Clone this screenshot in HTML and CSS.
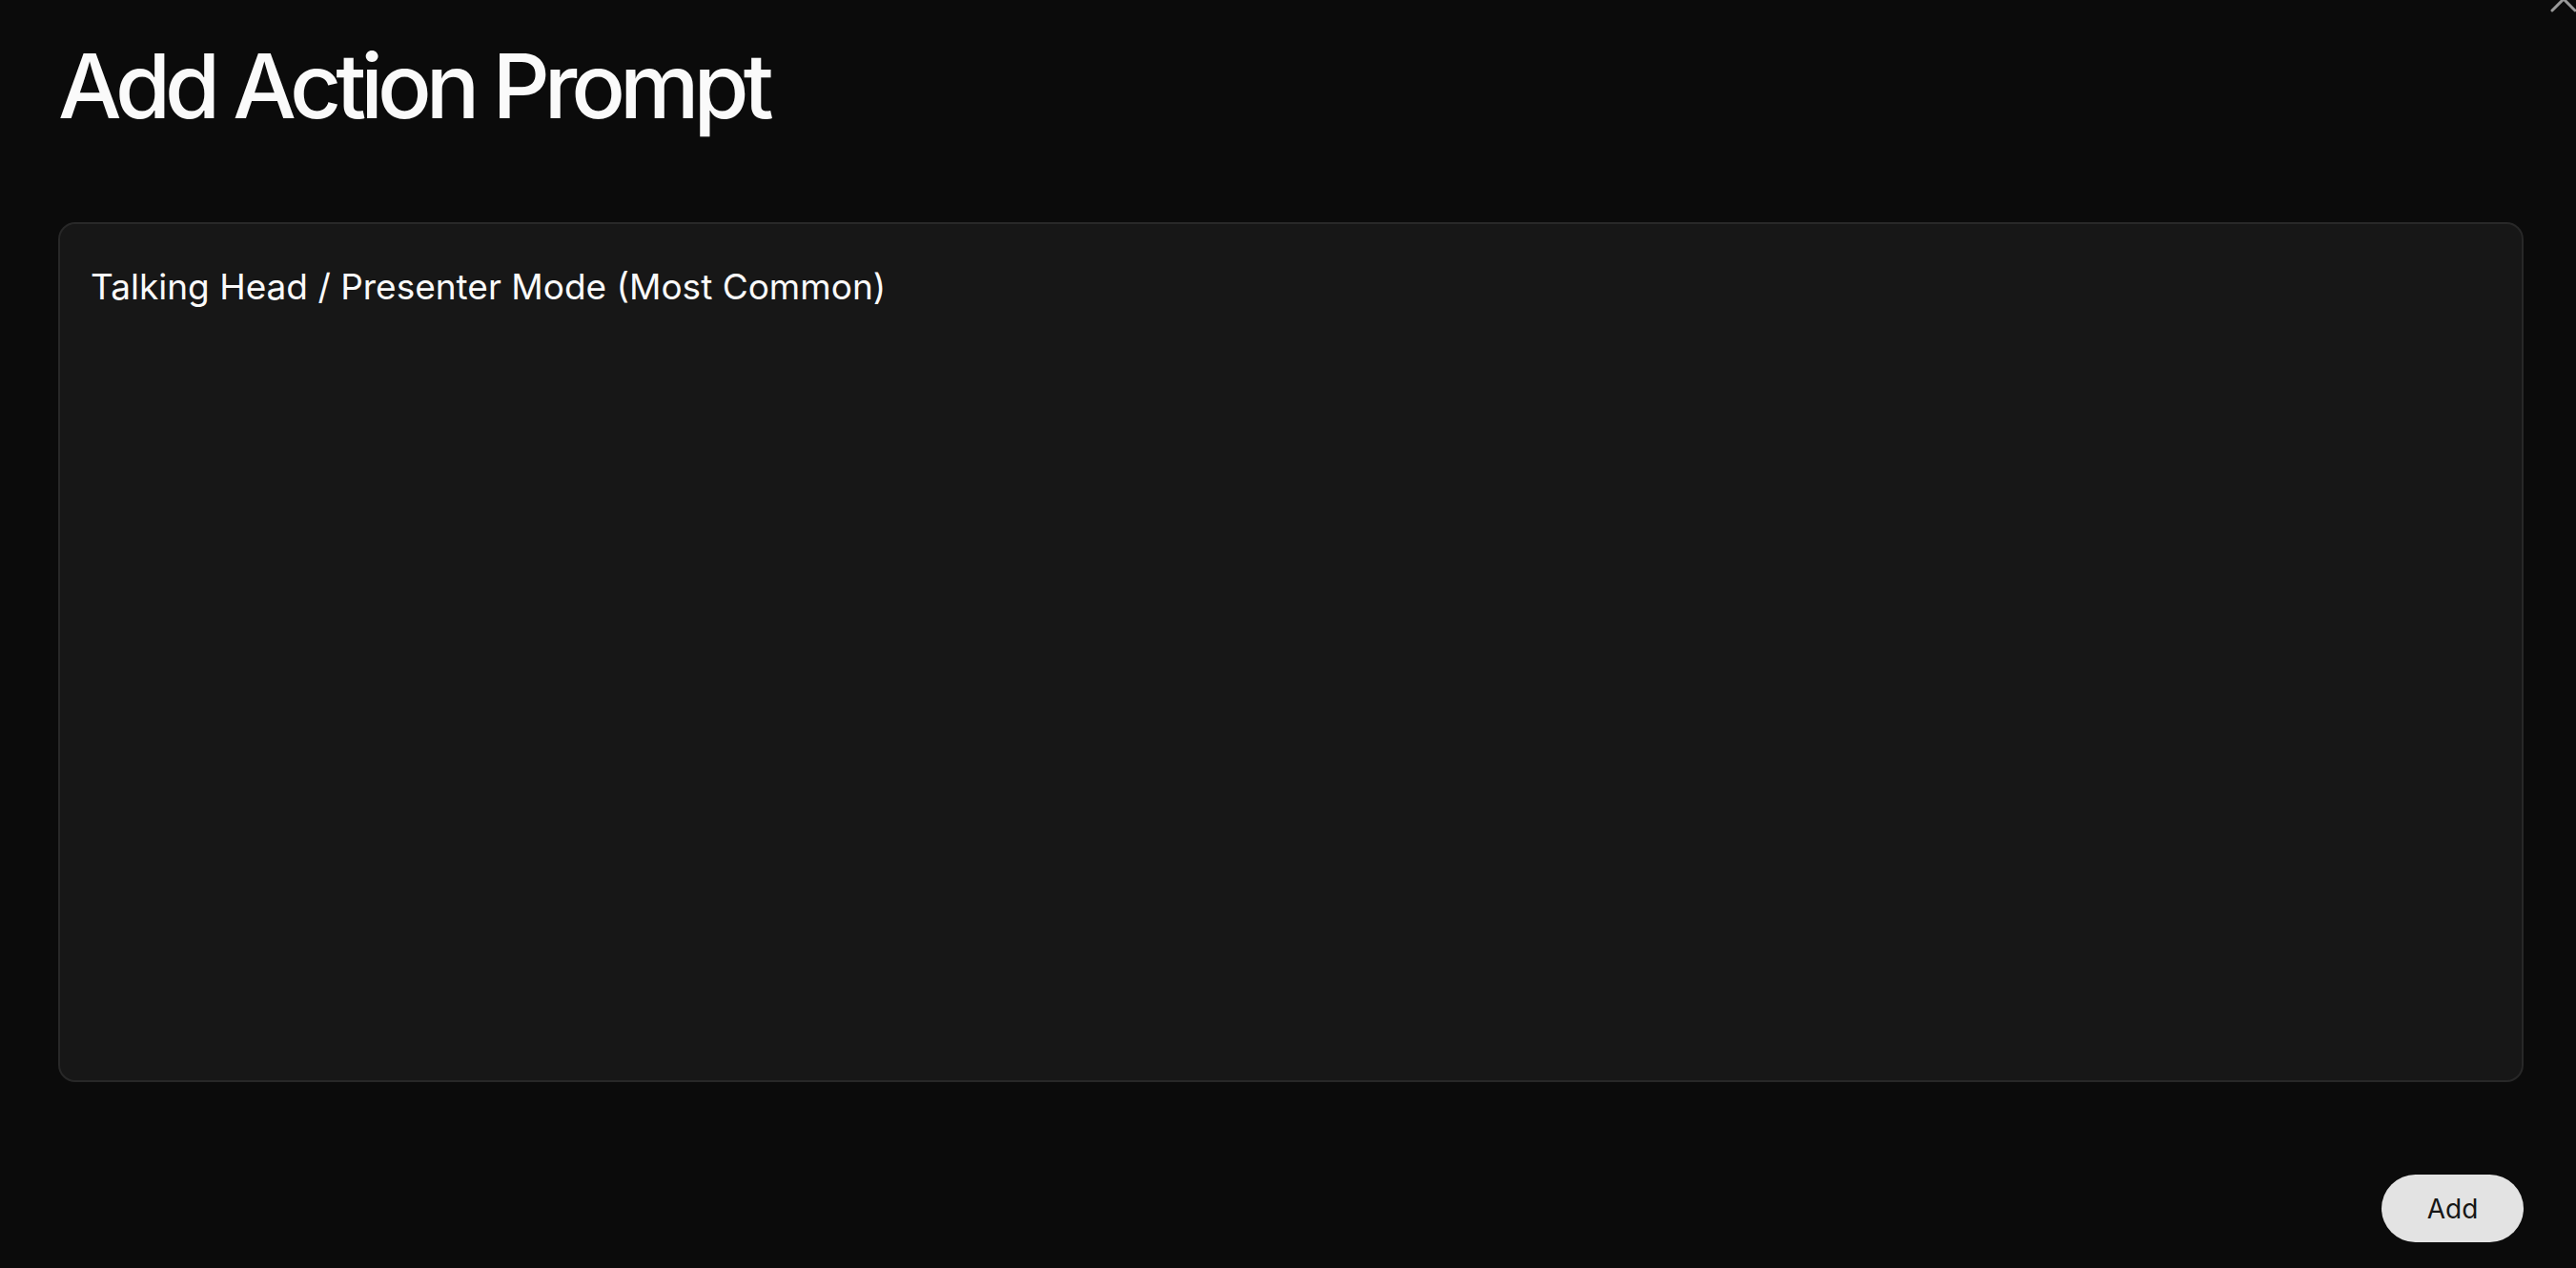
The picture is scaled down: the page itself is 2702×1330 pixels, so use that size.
FILE: index.html
```html
<!DOCTYPE html>
<html lang="en">

<head>
    <meta charset="UTF-8">
    <meta name="viewport" content="width=device-width, initial-scale=1.0">
    <title>Add Action Prompt</title>
    <link rel="stylesheet" href="styles.css">
</head>

<body>
    <div class="dialog">
        <button class="close" aria-label="Close">
            <svg width="34" height="34" viewBox="0 0 34 34">
                <path d="M5 5 L29 29 M29 5 L5 29" stroke="#9a9a9a" stroke-width="3" stroke-linecap="round" fill="none" />
            </svg>
        </button>
        <h1>Add Action Prompt</h1>
        <textarea class="prompt">Talking Head / Presenter Mode (Most Common)</textarea>
        <div class="actions">
            <button class="add">Add</button>
        </div>
    </div>
</body>

</html>
```

FILE: styles.css
```css
* {
    box-sizing: border-box;
}

html,
body {
    height: 100%;
}

body {
    margin: 0;
    background-color: #0b0b0b;
    font-family: Inter, "Noto Sans", sans-serif;
    color: #fafafa;
    overflow: hidden;
}

.dialog {
    position: relative;
    height: 100%;
    padding: 33px 55px 27px 61px;
    display: flex;
    flex-direction: column;
}

.close {
    position: absolute;
    top: -18px;
    right: -4px;
    width: 34px;
    height: 34px;
    padding: 0;
    border: none;
    background: none;
}

h1 {
    margin: 0;
    font-size: 94px;
    font-weight: 500;
    letter-spacing: -6px;
    line-height: normal;
}

.prompt {
    margin-top: 86px;
    height: 902px;
    width: 100%;
    padding: 43px 32px;
    background-color: #171717;
    border: 2px solid #282828;
    border-radius: 18px;
    color: #fafafa;
    font-family: Inter, "Noto Sans", sans-serif;
    font-size: 37px;
    line-height: normal;
    resize: none;
    outline: none;
}

.actions {
    margin-top: auto;
    display: flex;
    justify-content: flex-end;
}

.add {
    width: 149px;
    height: 71px;
    border: none;
    border-radius: 36px;
    background-color: #e3e3e3;
    color: #161616;
    font-family: Inter, "Noto Sans", sans-serif;
    font-size: 28px;
    font-weight: 400;
}
```
